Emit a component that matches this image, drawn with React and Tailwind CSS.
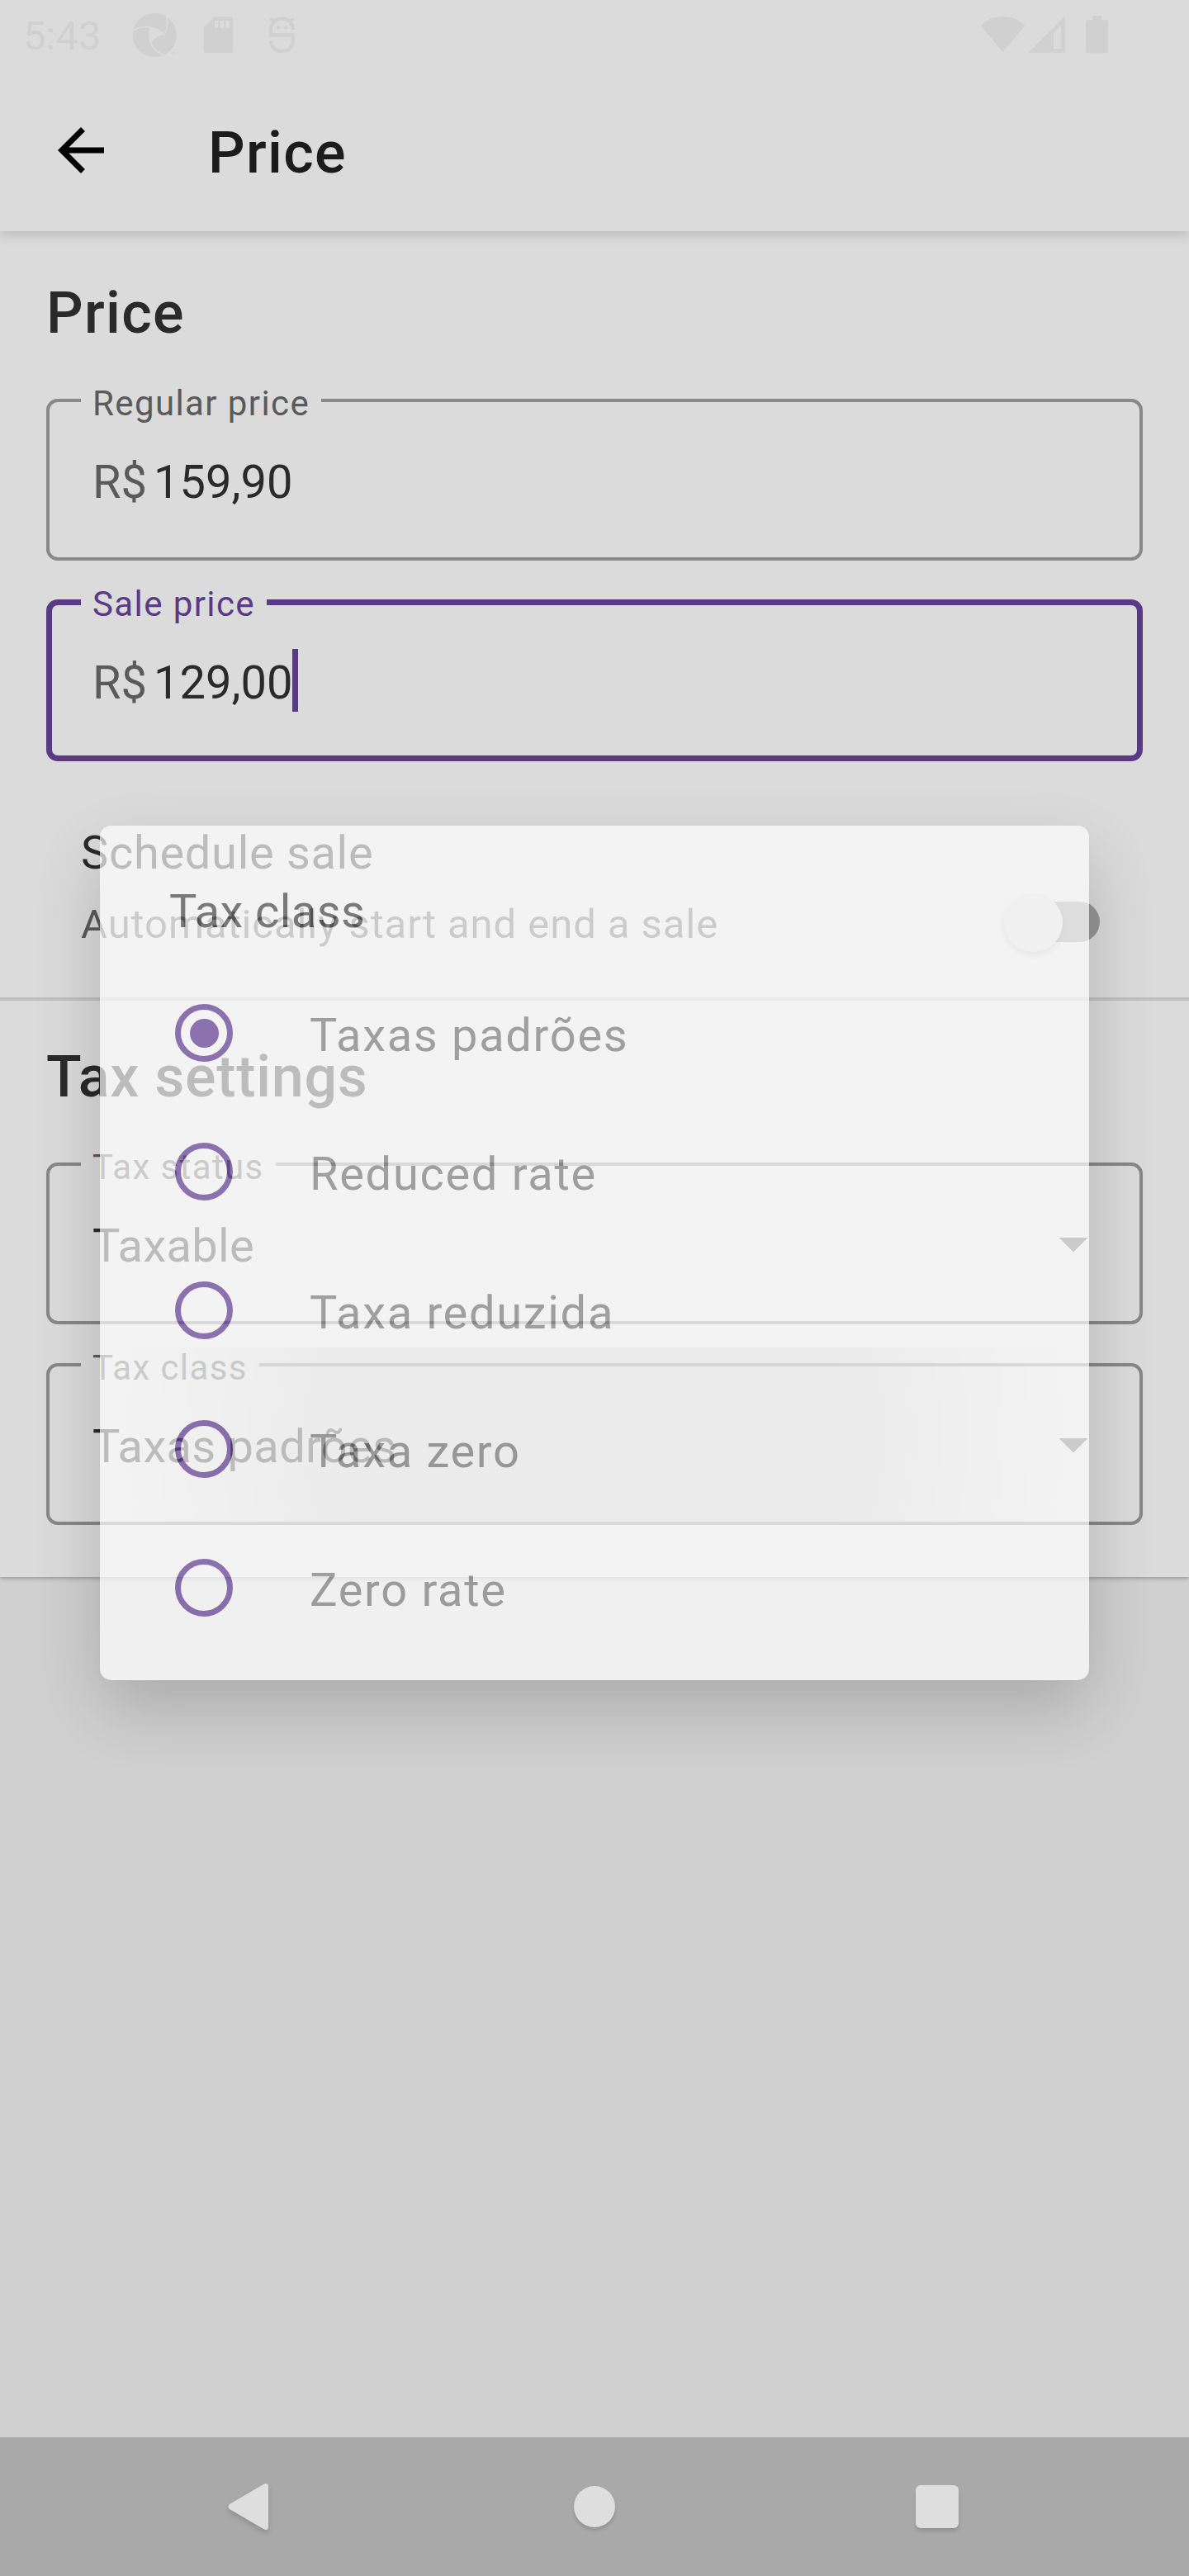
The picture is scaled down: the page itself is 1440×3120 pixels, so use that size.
import React from "react";

const OPTIONS = ["Taxas padrões", "Reduced rate", "Taxa reduzida", "Taxa zero", "Zero rate"];

function StatusBar() {
  return (
    <div className="flex h-[84px] items-start text-[#d0d0d0]">
      <span className="ml-[28px] mt-[2px] w-[132px] shrink-0 text-[49px] leading-[84px]">5:43</span>
      <svg className="mt-[15px] h-[55px] w-[55px] shrink-0" viewBox="480 45 165 165" fill="currentColor">
        <circle cx="562" cy="127.500" r="80" />
        <path d="M544 97Q576 102 599 124Q565 133 546 158Q535 130 544 97Z" fill="#dbdbdb" />
        <g fill="none" stroke="#dbdbdb" strokeWidth="5">
          <path d="M478 114Q505 95 545 98" />
          <path d="M597 126Q613 98 605 50" />
          <path d="M546 155Q562 188 602 205" />
        </g>
        <path d="M590 207L606 195L622 184H642V209H590Z" fill="#dbdbdb" />
        <path d="M621 189h5v5h-2v-3h-3zM628 189h5v5h-5z" />
      </svg>
      <svg className="ml-[31px] mt-[20px] h-[45px] w-[37px] shrink-0" viewBox="738 60 111 135" fill="currentColor">
        <path fillRule="evenodd" d="M779 61H836Q847 61 847 72V182Q847 192 836 192H751Q740 192 740 182V100ZM780 75V101H792V75ZM800 75V101H813V75ZM820 75V101H833V75Z" />
      </svg>
      <svg className="ml-[42px] mt-[19px] h-[46px] w-[33px] shrink-0" viewBox="975 57 99 138" fill="none" stroke="currentColor" strokeWidth="13">
        <path d="M1064.500 108A40.500 40.500 0 0 0 983.500 108V127.500H1064.500V148A40.500 38.500 0 0 1 983.500 148" />
        <path d="M982 68L996 80M1066 68L1052 80" strokeWidth="11" />
        <circle cx="1011" cy="100" r="6.500" fill="currentColor" stroke="none" />
        <circle cx="1038" cy="100" r="6.500" fill="currentColor" stroke="none" />
      </svg>
      <div className="ml-auto mr-[97px] mt-[18px] flex">
        <svg className="h-[47px] w-[55px]" viewBox="261 54 165 141" fill="currentColor">
          <path d="M264 93A110 110 0 0 1 423 93L343.500 190Z" />
        </svg>
        <svg className="ml-[3px] h-[47px] w-[46px]" viewBox="435 54 138 141" fill="currentColor">
          <path fillRule="evenodd" d="M436 191L569 59V191ZM528 120V177H555V93Z" />
        </svg>
        <svg className="ml-[23px] h-[47px] w-[29px]" viewBox="642 54 87 141" fill="currentColor">
          <path d="M669 57H702V72H718Q726 72 726 80V185Q726 193 718 193H653Q645 193 645 185V80Q645 72 653 72H669Z" />
        </svg>
      </div>
    </div>
  );
}

function Toolbar() {
  return (
    <div className="flex h-[196px] items-center pl-[56px]">
      <svg className="h-[84px] w-[84px]" viewBox="0 0 24 24">
        <path d="M20 11H7.830l5.590-5.590L12 4l-8 8 8 8 1.410-1.410L7.830 13H20v-2z" />
      </svg>
      <h1 className="ml-[112px] pt-[6px] text-[70px] font-medium leading-[84px] tracking-[1.300px] text-[#1c1c1c]">Price</h1>
    </div>
  );
}

function Field({ label, focused, className, children }) {
  return (
    <div
      className={
        "relative mx-[56px] flex h-[196px] items-center rounded-[14px] pl-[56px] pt-[6px] text-[56px] leading-[66px] text-[#2a2a2a] " +
        (focused ? "shadow-[inset_0_0_0_7px_#5a3985] " : "shadow-[inset_0_0_0_4px_#888888] ") +
        className
      }
    >
      <div className={"absolute left-[42px] top-0 bg-[#dbdbdb] px-[14px] " + (focused ? "h-[7px]" : "h-[4px]")}>
        <div
          className={
            "-mt-[19px] whitespace-nowrap text-[42px] leading-[50px] tracking-[1.400px] " +
            (focused ? "text-[#5a3985]" : "text-[#5a5a5a]")
          }
        >
          {label}
        </div>
      </div>
      {children}
    </div>
  );
}

function Caret() {
  return (
    <svg className="-mt-[2px] ml-auto mr-[66px] h-[18px] w-[36px]" viewBox="0 0 36 18" fill="#5a5a5a">
      <path d="M.5 0H35.500L18 17.500Z" />
    </svg>
  );
}

function Radio({ checked }) {
  return (
    <span className="flex h-[70px] w-[70px] shrink-0 items-center justify-center rounded-full border-[7px] border-[#674199]">
      {checked && <span className="h-[35px] w-[35px] rounded-full bg-[#674199]" />}
    </span>
  );
}

function TaxClassDialog() {
  return (
    <div className="absolute left-[121px] top-[1000px] h-[1035px] w-[1198px] rounded-[14px] bg-white pt-[71px] opacity-[.685] shadow-[0_34px_84px_rgba(0,0,0,.27)]">
      <h3 className="mb-[30px] pl-[84px] text-[56px] leading-[66px] tracking-[0.400px] text-[#4d4d4d]">Tax class</h3>
      {OPTIONS.map((name, i) => (
        <div key={name} className="flex h-[168px] items-center pl-[91px]">
          <Radio checked={i === 0} />
          <span className="ml-[93px] pt-[6px] text-[56px] leading-[66px] tracking-[1.700px] text-[#858585]">{name}</span>
        </div>
      ))}
    </div>
  );
}

function NavBar() {
  return (
    <div className="flex h-[168px] items-center bg-[#a9a9a9] pl-[276px]">
      <svg className="h-[70px] w-[50px] drop-shadow-[0_4px_3px_rgba(0,0,0,.15)]" viewBox="0 0 50 70" fill="#dedede">
        <path d="M2 32L43 8Q49 5 49 11V59Q49 65 43 62L2 38Q-1 35 2 32Z" />
      </svg>
      <div className="ml-[369px] h-[50px] w-[50px] rounded-full bg-[#dedede] shadow-[0_4px_4px_rgba(0,0,0,.13)]" />
      <div className="ml-[364px] h-[52px] w-[52px] rounded-[6px] bg-[#dedede] shadow-[0_4px_4px_rgba(0,0,0,.13)]" />
    </div>
  );
}

export default function App() {
  return (
    <div className="relative flex h-[3120px] w-[1440px] flex-col overflow-hidden bg-[#d0d0d0] font-[Roboto,sans-serif]">
      <header className="relative z-10 bg-[#dbdbdb] shadow-[0_5px_14px_rgba(0,0,0,.14)]">
        <StatusBar />
        <Toolbar />
      </header>

      <main className="bg-[#dbdbdb] pb-[63px] pt-[57px] shadow-[0_2px_5px_rgba(0,0,0,.26)]">
        <h2 className="pl-[56px] text-[70px] font-medium leading-[84px] tracking-[1.300px] text-[#2a2a2a]">Price</h2>
        <Field label="Regular price" className="mt-[62px]">
          <span className="text-[#5a5a5a]">R$</span>
          <span className="ml-[8px]">159,90</span>
        </Field>
        <Field label="Sale price" focused className="mt-[47px]">
          <span className="text-[#5a5a5a]">R$</span>
          <span className="ml-[8px]">129,00</span>
          <span className="-mt-[6px] h-[76px] w-[7px] bg-[#5a3985]" />
        </Field>

        <div className="mt-[79px] flex h-[207px] justify-between pl-[98px] pr-[108px]">
          <div>
            <p className="text-[56px] leading-[64px] tracking-[.680px] text-[#2a2a2a]">Schedule sale</p>
            <p className="mt-[27px] text-[49px] leading-[56px] tracking-[.940px] text-[#5a5a5a]">
              Automatically start and end a sale
            </p>
          </div>
          <div className="mt-[91px] h-[49px] w-[98px] rounded-full bg-[#969696]">
            <div className="-ml-[18px] -mt-[10px] h-[71px] w-[71px] rounded-full bg-[#d2d2d2] shadow-[0_4px_7px_rgba(0,0,0,.18)]" />
          </div>
        </div>
        <div className="h-[4px] bg-[#c0c0c0]" />

        <h2 className="mt-[50px] pl-[56px] text-[70px] font-medium leading-[84px] tracking-[.700px] text-[#2a2a2a]">Tax settings</h2>
        <Field label="Tax status" className="mt-[62px]">
          <span className="tracking-[.300px]">Taxable</span>
          <Caret />
        </Field>
        <Field label="Tax class" className="mt-[47px]">
          <div className="absolute inset-x-0 -top-[19px] bottom-[4px] bg-[radial-gradient(circle_600px_at_50%_50%,rgba(0,0,0,.125)_42%,rgba(0,0,0,.105)_56%,rgba(0,0,0,.015)_92%,transparent)]" />
          <span className="tracking-[.300px]">Taxas padrões</span>
          <Caret />
        </Field>
      </main>

      <div className="flex-1" />
      <NavBar />
      <TaxClassDialog />
    </div>
  );
}
